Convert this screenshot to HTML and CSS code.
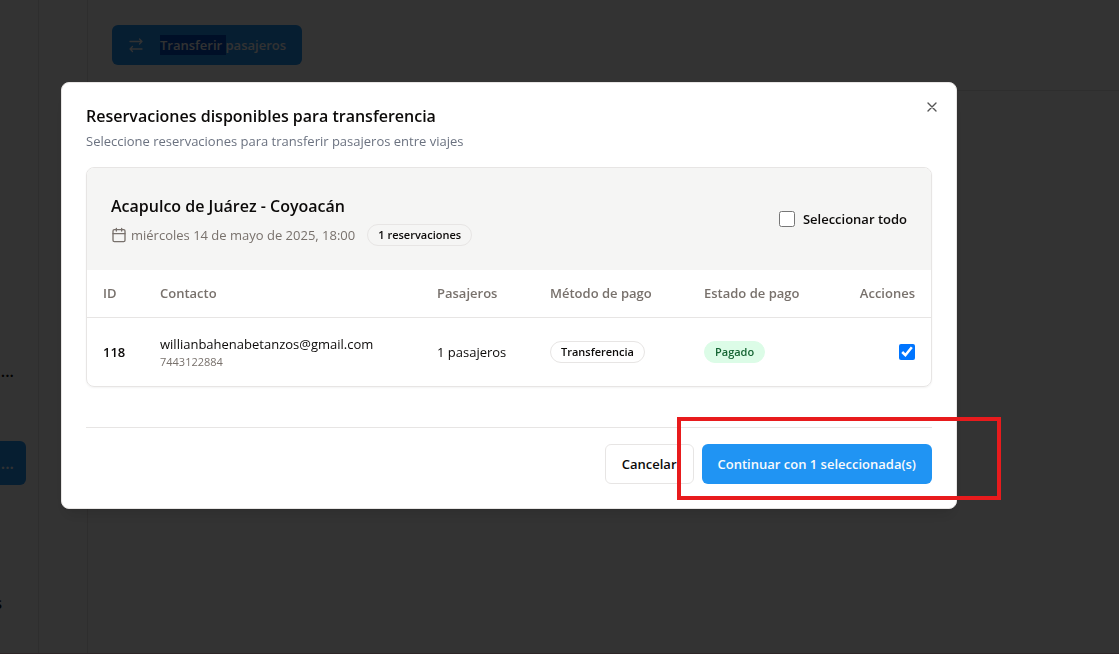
FILE: index.html
```html
<!DOCTYPE html>
<html lang="es">
<head>
<meta charset="utf-8">
<meta name="viewport" content="width=device-width, initial-scale=1">
<title>Transferir pasajeros</title>
<link rel="stylesheet" href="styles.css">
</head>
<body>
<div class="page">
  <nav class="sidebar">
    <a class="nav-item" href="#">...</a>
    <a class="nav-item nav-item-active" href="#">...</a>
    <a class="nav-item nav-item-last" href="#">s</a>
  </nav>
  <main class="content">
    <div class="toolbar">
      <button class="btn btn-primary btn-transfer" type="button">
        <svg class="icon" viewBox="0 0 16 16" aria-hidden="true"><path d="M2 4.5h12M11.5 2 14 4.5 11.5 7M14 12H2M4.500 9.500 2 12l2.500 2.500"/></svg>
        <span><mark class="selected">Transferir </mark>pasajeros</span>
      </button>
    </div>
  </main>
</div>

<div class="overlay">
  <section class="dialog" role="dialog" aria-modal="true" aria-labelledby="dialog-title">
    <button class="close" type="button" aria-label="Cerrar">
      <svg class="icon" viewBox="0 0 24 24" aria-hidden="true"><path d="M18 6 6 18M6 6l12 12"/></svg>
    </button>
    <header class="dialog-header">
      <h2 class="title" id="dialog-title">Reservaciones disponibles para transferencia</h2>
      <p class="description">Seleccione reservaciones para transferir pasajeros entre viajes</p>
    </header>

    <div class="card">
      <div class="card-header">
        <div class="trip">
          <h3 class="trip-name">Acapulco de Juárez - Coyoacán</h3>
          <div class="trip-meta">
            <span class="trip-date">
              <svg class="icon" viewBox="0 0 24 24" aria-hidden="true"><rect x="3" y="4" width="18" height="18" rx="2"/><path d="M8 2v4M16 2v4M3 10h18"/></svg>
              miércoles 14 de mayo de 2025, 18:00
            </span>
            <span class="badge">1 reservaciones</span>
          </div>
        </div>
        <label class="select-all"><input class="check" type="checkbox">Seleccionar todo</label>
      </div>
      <table class="table">
        <thead>
          <tr>
            <th class="col-id">ID</th>
            <th>Contacto</th>
            <th class="col-passengers">Pasajeros</th>
            <th class="col-method">Método de pago</th>
            <th class="col-status">Estado de pago</th>
            <th class="col-actions">Acciones</th>
          </tr>
        </thead>
        <tbody>
          <tr>
            <td class="id">118</td>
            <td><div>willianbahenabetanzos@gmail.com</div><div class="phone">7443122884</div></td>
            <td>1 pasajeros</td>
            <td><span class="badge">Transferencia</span></td>
            <td><span class="badge badge-paid">Pagado</span></td>
            <td class="col-actions"><input class="check" type="checkbox" aria-label="Seleccionar reservación 118" checked></td>
          </tr>
        </tbody>
      </table>
    </div>

    <footer class="dialog-footer">
      <button class="btn btn-outline" type="button">Cancelar</button>
      <button class="btn btn-primary" type="button">Continuar con 1 seleccionada(s)</button>
    </footer>
  </section>
</div>
<div class="highlight"></div>
</body>
</html>
```

FILE: styles.css
```css
* { box-sizing: border-box; }

body {
  margin: 0;
  overflow: hidden;
  background: #fff;
  color: #0c0a09;
  font-family: "Segoe UI", "Open Sans", sans-serif;
  font-size: 13px;
  line-height: 20px;
}

h2, h3, p { margin: 0; }

button, input { font: inherit; }

.icon {
  width: 16px;
  height: 16px;
  flex: none;
  fill: none;
  stroke: currentColor;
  stroke-width: 2;
  stroke-linecap: round;
  stroke-linejoin: round;
}

.page {
  display: flex;
  min-height: 100vh;
  border-bottom: 1px solid #e2b8c4;
}

.sidebar {
  display: flex;
  flex-direction: column;
  gap: 48px;
  width: 39px;
  padding-top: 349px;
  border-right: 1px solid #e7e5e4;
}

.nav-item {
  display: flex;
  align-items: center;
  justify-content: flex-end;
  width: 26px;
  height: 44px;
  padding-right: 12px;
  border-radius: 0 6px 6px 0;
  color: #0c0a09;
  font-size: 16px;
  font-weight: 600;
  text-decoration: none;
}

.nav-item-active {
  background: #2094f3;
  color: #f8fafc;
}

.nav-item-last {
  margin-top: 48px;
  padding-right: 24px;
}

.content {
  flex: 1;
  margin-left: 48px;
  border-left: 1px solid #e7e5e4;
}

.toolbar {
  padding: 25px 24px;
  border-bottom: 1px solid #e7e5e4;
}

.btn {
  display: inline-flex;
  align-items: center;
  justify-content: center;
  height: 40px;
  padding: 0 16px;
  border: 0;
  border-radius: 6px;
  font-weight: 600;
  white-space: nowrap;
}

.btn-primary {
  background: #2094f3;
  color: #f8fafc;
}

.btn-transfer { gap: 16px; }

.btn-transfer .icon { stroke-width: 1.3; }

.btn-outline {
  border: 1px solid #e7e5e4;
  background: #fff;
  color: #0c0a09;
}

.selected {
  padding: 1px 0;
  background: #004bc0;
  color: inherit;
}

.overlay {
  position: fixed;
  inset: 0;
  display: flex;
  align-items: flex-start;
  padding: 82px 162px 0 61px;
  background: rgba(0, 0, 0, 0.8);
}

.dialog {
  position: relative;
  flex: 1;
  padding: 24px;
  border: 1px solid #e7e5e4;
  border-radius: 8px;
  background: #fff;
  box-shadow: 0 10px 15px -3px rgba(0, 0, 0, 0.1), 0 4px 6px -4px rgba(0, 0, 0, 0.1);
}

.close {
  position: absolute;
  top: 16px;
  right: 16px;
  display: flex;
  padding: 0;
  border: 0;
  background: none;
  color: #555;
}

.dialog-header {
  display: grid;
  gap: 6px;
  margin-bottom: 16px;
}

.title {
  font-size: 16px;
  font-weight: 600;
  line-height: 18px;
}

.description { color: #6b7280; }

.card {
  overflow: hidden;
  border: 1px solid #e7e5e4;
  border-radius: 8px;
  box-shadow: 0 1px 2px rgba(0, 0, 0, 0.05);
}

.card-header {
  display: flex;
  align-items: center;
  justify-content: space-between;
  padding: 24px;
  background: #f5f5f4;
}

.trip {
  display: grid;
  gap: 4px;
}

.trip-name {
  font-size: 16px;
  font-weight: 600;
  line-height: 28px;
}

.trip-meta {
  display: flex;
  align-items: center;
  gap: 12px;
  height: 22px;
}

.trip-date {
  display: flex;
  align-items: center;
  gap: 4px;
  color: #78716c;
}

.badge {
  display: inline-flex;
  align-items: center;
  height: 22px;
  padding: 0 10px;
  border: 1px solid #e7e5e4;
  border-radius: 11px;
  font-size: 11px;
  font-weight: 600;
  line-height: 16px;
  vertical-align: middle;
}

.badge-paid {
  border-color: #dcfce7;
  background: #dcfce7;
  color: #166534;
}

.check {
  width: 16px;
  height: 16px;
  margin: 0;
}

.select-all {
  display: flex;
  align-items: center;
  gap: 8px;
  font-weight: 600;
}

.table {
  width: 100%;
  border-collapse: collapse;
  table-layout: fixed;
}

.table th {
  height: 47px;
  padding: 0 16px;
  border-bottom: 1px solid #e7e5e4;
  color: #78716c;
  font-weight: 600;
  text-align: left;
  white-space: nowrap;
}

.table td {
  height: 68px;
  padding: 16px;
}

.table .col-id { width: 57px; }
.table .col-passengers { width: 113px; }
.table .col-method { width: 154px; }
.table .col-status { width: 143px; }
.table .col-actions { width: 100px; text-align: right; }

.col-actions .check {
  display: block;
  margin-left: auto;
}

.id { font-weight: 600; }

.phone {
  color: #78716c;
  font-size: 11px;
  line-height: 16px;
}

.dialog-footer {
  display: flex;
  justify-content: flex-end;
  gap: 8px;
  margin-top: 40px;
  padding-top: 16px;
  border-top: 1px solid #e7e5e4;
}

.highlight {
  position: absolute;
  top: 417px;
  left: 677px;
  width: 324px;
  height: 83px;
  border: 4px solid #e81b1d;
  pointer-events: none;
}
```
